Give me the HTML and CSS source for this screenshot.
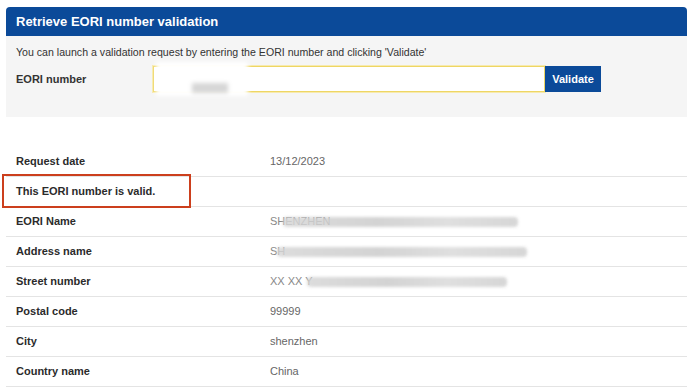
FILE: index.html
```html
<!DOCTYPE html>
<html lang="en">
<head>
    <meta charset="UTF-8">
    <meta name="viewport" content="width=device-width, initial-scale=1.0">
    <title>EORI number validation</title>
    <link rel="stylesheet" href="styles.css">
</head>
<body>
    <div class="page">
        <section class="eori-box">
            <h1 class="box-title">Retrieve EORI number validation</h1>
            <div class="box-body">
                <p class="intro">You can launch a validation request by entering the EORI number and clicking 'Validate'</p>
                <div class="form-row">
                    <label class="form-label" for="eori">EORI number</label>
                    <input type="text" id="eori" class="eori-input">
                    <button class="validate-btn">Validate</button>
                    <!-- redacted number -->
                    <span class="redact"><span class="redact-smudge"></span></span>
                </div>
            </div>
        </section>

        <div class="results">
            <table class="results-table">
                <tr><th>Request date</th><td>13/12/2023</td></tr>
                <tr><th>This EORI number is valid.</th><td></td></tr>
                <tr><th>EORI Name</th><td><span class="masked">SHENZHEN<span class="smudge smudge-name"></span></span></td></tr>
                <tr><th>Address name</th><td><span class="masked">SH<span class="smudge smudge-address"></span></span></td></tr>
                <tr><th>Street number</th><td><span class="masked">XX XX Y<span class="smudge smudge-street"></span></span></td></tr>
                <tr><th>Postal code</th><td>99999</td></tr>
                <tr><th>City</th><td>shenzhen</td></tr>
                <tr><th>Country name</th><td>China</td></tr>
            </table>
            <div class="highlight"></div>
        </div>
    </div>
</body>
</html>
```

FILE: styles.css
```css
body {
    margin: 0;
    background-color: #fff;
    font-family: "Liberation Sans", Arial, sans-serif;
    color: #333;
}

.page {
    width: 681px;
    padding: 7px 0 0 6px;
}

.eori-box {
    background-color: #f5f5f5;
    border-radius: 4px 4px 0 0;
}

.box-title {
    margin: 0;
    height: 29px;
    line-height: 29px;
    padding-left: 10px;
    font-size: 13px;
    font-weight: bold;
    color: #fff;
    background-color: #0b4a99;
    border-radius: 4px 4px 0 0;
}

.box-body {
    padding: 10px 10px 25px 10px;
}

.intro {
    margin: 0 0 7px 0;
    font-size: 10.6px;
    line-height: 13px;
    color: #333;
}

.form-row {
    position: relative;
    display: flex;
    align-items: center;
}

.form-label {
    width: 137px;
    font-size: 11px;
    font-weight: bold;
    color: #333;
}

.eori-input {
    width: 392px;
    height: 26px;
    box-sizing: border-box;
    border: 1px solid #eed664;
    box-shadow: 0 0 0 1px #f7eaae;
    background-color: #fff;
    outline: none;
}

.validate-btn {
    width: 56px;
    height: 26px;
    border: none;
    background-color: #0b4a99;
    color: #fff;
    font-family: "Liberation Sans", Arial, sans-serif;
    font-size: 11px;
    font-weight: bold;
    cursor: pointer;
}

.redact {
    position: absolute;
    left: 140px;
    top: -4px;
    width: 92px;
    height: 34px;
    background-color: #fff;
    filter: blur(2px);
}

.redact-smudge {
    position: absolute;
    left: 36px;
    top: 21px;
    width: 36px;
    height: 10px;
    background-color: #d6d6d6;
}

.results {
    position: relative;
    margin-top: 29px;
}

.results-table {
    width: 681px;
    border-collapse: collapse;
    font-size: 11px;
}

.results-table tr {
    height: 30px;
    border-bottom: 1px solid #e4e4e4;
}

.results-table th {
    width: 254px;
    padding: 0 0 0 10px;
    text-align: left;
    font-weight: bold;
    color: #2b2b2b;
}

.results-table td {
    padding: 0;
    color: #666;
    white-space: nowrap;
}

.masked {
    position: relative;
    color: #888;
}

.smudge {
    position: absolute;
    top: 2px;
    height: 10px;
    background: linear-gradient(90deg, #d6d6d6, #cccccc 40%, #dadada 70%, #d0d0d0);
    filter: blur(1.5px);
    border-radius: 4px;
    opacity: 0.85;
}

.smudge-name {
    left: 13px;
    width: 235px;
}

.smudge-address {
    left: 7px;
    width: 250px;
}

.smudge-street {
    left: 37px;
    width: 200px;
}

.highlight {
    position: absolute;
    left: -4px;
    top: 28px;
    width: 185px;
    height: 30px;
    border: 2.5px solid #cc3f1d;
}
```
